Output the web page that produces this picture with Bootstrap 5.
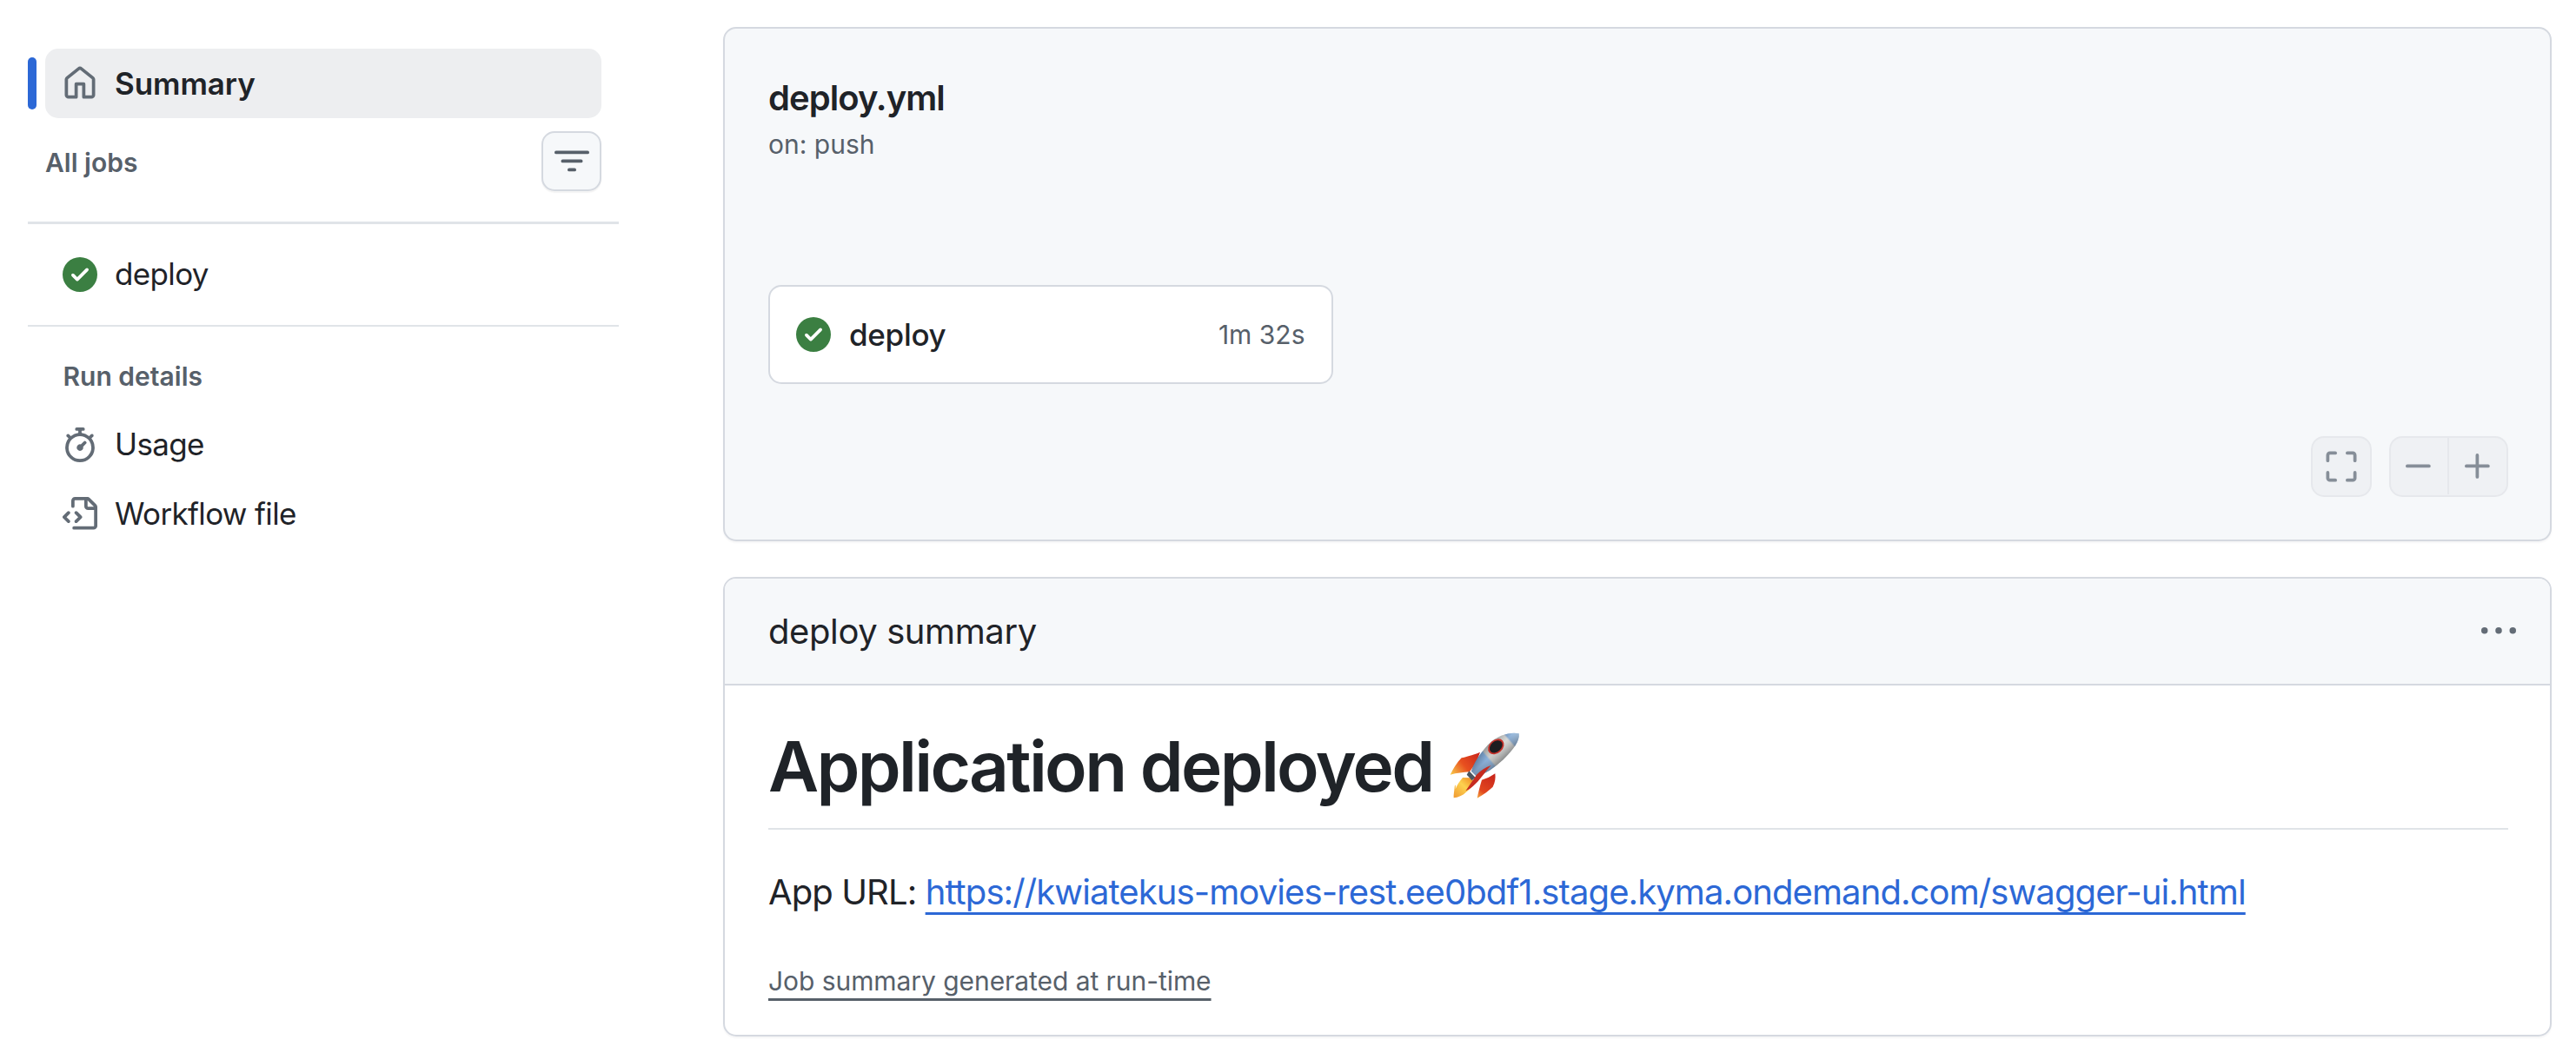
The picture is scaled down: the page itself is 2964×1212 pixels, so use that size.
<!DOCTYPE html>
<html lang="en">
<head>
<meta charset="utf-8">
<title>deploy summary</title>
<link href="https://cdn.jsdelivr.net/npm/bootstrap@5.3.0/dist/css/bootstrap.min.css" rel="stylesheet">
<style>
  body { font-family: Inter, "Liberation Sans", sans-serif; color: #1f2328; background: #fff; }
  svg { display: block; flex: none; fill: currentColor; }
  .oct { width: 40px; height: 40px; }
  .ic-muted { color: #636c76; }
  .ic-ok { color: #3b7f42; }

  .page-wrap { padding: 31px 28px 20px 32px; }
  .side-col { width: 680px; margin-top: 25px; flex: none; }
  .main-col { width: 2104px; margin-left: 120px; flex: none; }

  .active-bar { width: 10px; height: 60px; border-radius: 5px; background: #2c68d6; margin-right: 10px; flex: none; }
  .side-link { height: 80px; padding-left: 20px; gap: 20px; font-size: 35px; letter-spacing: -.65px; color: #1f2328; text-decoration: none; border-radius: 15px; }
  .side-link.is-active { width: 640px; background: #edeef0; font-weight: 600; letter-spacing: -.1px; }
  .side-indent { margin-left: 20px; }
  .jobs-row { margin: 15px 20px 35px 20px; height: 69px; }
  .side-head { font-size: 30px; font-weight: 600; color: #57606a; line-height: 40px; }
  .jobs-label { margin-top: 2px; }
  .filter-btn { width: 69px; height: 69px; padding: 0; background: #f6f8fa; border: 2.5px solid #d5d9e0; border-radius: 15px; color: #57606a; box-shadow: 0 2px 1px rgba(31,35,40,.05); }
  .side-rule { height: 2.5px; border: 0; margin: 0; opacity: 1; background: #e0e4e8; }
  .rule-gap { margin-top: 18px; }
  .run-head { margin: 37px 0 18.5px 40.5px; }

  .gh-panel { border: 2.5px solid #d5d9e0; border-radius: 15px; box-shadow: 0 2px 2px rgba(31,35,40,.04); color: #1f2328; }
  .graph-panel { background: #f6f8fa; height: 592px; padding: 55px 46.5px 0 50px; margin-bottom: 41px; }
  .wf-title { font-size: 40px; font-weight: 600; line-height: 50px; letter-spacing: -.95px; }
  .wf-sub { font-size: 30px; line-height: 44px; margin-top: 6px; color: #57606a; }
  .job-box { width: 649.5px; height: 114px; margin-top: 140px; padding: 0 30px; background: #fff; border: 2.5px solid #d5d9e0; border-radius: 15px; }
  .job-name { font-size: 35px; font-weight: 500; margin-left: 21px; letter-spacing: -.3px; }
  .job-time { font-size: 30px; color: #57606a; margin-left: auto; }
  .zoom-row { margin-top: 60px; gap: 20px; padding-right: 2px; }
  .zoom-btn { width: 70px; height: 70px; padding: 0; background: #eff1f4; border: 2.5px solid #e6e8ec; border-radius: 15px; color: #868e98; }
  .zoom-group { background: #eff1f4; border: 2.5px solid #e6e8ec; border-radius: 15px; overflow: hidden; }
  .zoom-group .zoom-btn { border: 0; border-radius: 0; width: 65px; height: 65px; background: transparent; }
  .zoom-group .zoom-btn + .zoom-btn { border-left: 2.5px solid #e6e8ec; width: 68px; }

  .sum-head { height: 122.5px; padding: 2px 39.5px 0 50px; background: #f6f8fa; border-bottom: 2.5px solid #d5d9e0; border-radius: 12.5px 12.5px 0 0; }
  .sum-title { font-size: 40px; line-height: 50px; letter-spacing: -.4px; }
  .sum-body { padding: 43px 48.5px 39.5px 50px; }
  .sum-h1 { font-size: 80px; font-weight: 600; line-height: 100px; letter-spacing: -2.7px; margin: 0; padding-bottom: 21px; border-bottom: 2.5px solid #e0e4e8; gap: 19px; color: #1f2328; }
  .sum-url { font-size: 40px; line-height: 60px; letter-spacing: -.9px; margin: 42px 0 0; }
  .sum-url a { color: #2c68d6; text-decoration-thickness: 3px; text-underline-offset: 9px; }
  .sum-note { font-size: 30px; line-height: 45px; letter-spacing: -.06px; margin: 50px 0 0; }
  .sum-note a { color: #57606a; text-decoration-thickness: 3px; text-underline-offset: 9px; }
  .rocket { width: 84px; height: 80px; }
</style>
</head>
<body>
<div class="d-flex page-wrap">
  <aside class="side-col d-flex flex-column">
    <div class="d-flex align-items-center">
      <span class="active-bar"></span>
      <a href="#" class="side-link is-active d-flex align-items-center">
        <svg class="oct ic-muted" viewBox="0 0 16 16" aria-hidden="true"><path d="M6.906.664a1.749 1.749 0 0 1 2.187 0l5.25 4.2c.415.332.657.835.657 1.367v7.019A1.75 1.75 0 0 1 13.25 15h-3.5a.75.75 0 0 1-.75-.75V9H7v5.25a.75.75 0 0 1-.75.75h-3.5A1.75 1.75 0 0 1 1 13.25V6.23c0-.531.242-1.034.657-1.366l5.25-4.2Zm1.25 1.171a.25.25 0 0 0-.312 0l-5.25 4.2a.25.25 0 0 0-.094.196v7.019c0 .138.112.25.25.25H5.5V8.25a.75.75 0 0 1 .75-.75h3.5a.75.75 0 0 1 .75.75v5.25h2.75a.25.25 0 0 0 .25-.25V6.23a.25.25 0 0 0-.094-.195Z"/></svg>
        Summary
      </a>
    </div>
    <div class="d-flex align-items-center justify-content-between jobs-row">
      <span class="side-head jobs-label">All jobs</span>
      <button type="button" class="btn filter-btn d-flex align-items-center justify-content-center" aria-label="Filter">
        <svg class="oct" viewBox="0 0 16 16" aria-hidden="true"><path d="M.75 3h14.5a.75.75 0 0 1 0 1.5H.75a.75.75 0 0 1 0-1.5ZM3 7.75A.75.75 0 0 1 3.75 7h8.5a.75.75 0 0 1 0 1.5h-8.5A.75.75 0 0 1 3 7.75Zm3 4a.75.75 0 0 1 .75-.75h2.5a.75.75 0 0 1 0 1.5h-2.5a.75.75 0 0 1-.75-.75Z"/></svg>
      </button>
    </div>
    <hr class="side-rule">
    <a href="#" class="side-link side-indent rule-gap d-flex align-items-center">
      <svg class="oct ic-ok" viewBox="0 0 16 16" aria-hidden="true"><path d="M8 16A8 8 0 1 1 8 0a8 8 0 0 1 0 16Zm3.78-9.72a.751.751 0 0 0-.018-1.042.751.751 0 0 0-1.042-.018L6.75 9.19 5.28 7.72a.751.751 0 0 0-1.042.018.751.751 0 0 0-.018 1.042l2 2a.75.75 0 0 0 1.06 0Z"/></svg>
      deploy
    </a>
    <hr class="side-rule rule-gap">
    <div class="side-head run-head">Run details</div>
    <a href="#" class="side-link side-indent d-flex align-items-center">
      <svg class="oct ic-muted" viewBox="0 0 16 16" aria-hidden="true"><path d="M5.75.75A.75.75 0 0 1 6.5 0h3a.75.75 0 0 1 0 1.5h-.75v1l-.001.041a6.724 6.724 0 0 1 3.464 1.435l.007-.006.75-.75a.749.749 0 0 1 1.275.326.749.749 0 0 1-.215.734l-.75.75-.006.007a6.75 6.75 0 1 1-10.548 0L2.72 5.03l-.75-.75a.751.751 0 0 1 .018-1.042.751.751 0 0 1 1.042-.018l.75.75.007.006A6.72 6.72 0 0 1 7.25 2.541V1.5H6.5a.75.75 0 0 1-.75-.75ZM8 14.5a5.25 5.25 0 1 0-.001-10.501A5.25 5.25 0 0 0 8 14.5Zm.389-6.7 1.33-1.33a.75.75 0 1 1 1.061 1.06L9.45 8.861A1.503 1.503 0 0 1 8 10.75a1.499 1.499 0 1 1 .389-2.95Z"/></svg>
      Usage
    </a>
    <a href="#" class="side-link side-indent d-flex align-items-center">
      <svg class="oct ic-muted" viewBox="0 0 16 16" aria-hidden="true"><path d="M4 1.75C4 .784 4.784 0 5.75 0h5.586c.464 0 .909.184 1.237.513l2.914 2.914c.329.328.513.773.513 1.237v8.586A1.75 1.75 0 0 1 14.25 15h-9a.75.75 0 0 1 0-1.5h9a.25.25 0 0 0 .25-.25V6h-2.75A1.75 1.75 0 0 1 10 4.25V1.5H5.75a.25.25 0 0 0-.25.25v2.5a.75.75 0 0 1-1.5 0Zm1.72 4.97a.75.75 0 0 1 1.06 0l2 2a.75.75 0 0 1 0 1.06l-2 2a.749.749 0 0 1-1.275-.326.749.749 0 0 1 .215-.734l1.47-1.47-1.47-1.47a.75.75 0 0 1 0-1.06ZM3.28 7.78 1.81 9.25l1.47 1.47a.751.751 0 0 1-.018 1.042.751.751 0 0 1-1.042.018l-2-2a.75.75 0 0 1 0-1.06l2-2a.751.751 0 0 1 1.042.018.751.751 0 0 1 .018 1.042Zm8.22-6.218V4.25c0 .138.112.25.25.25h2.688l-.011-.013-2.914-2.914-.013-.011Z"/></svg>
      Workflow file
    </a>
  </aside>

  <main class="main-col d-flex flex-column">
    <section class="gh-panel graph-panel d-flex flex-column">
      <div class="wf-title">deploy.yml</div>
      <div class="wf-sub">on: push</div>
      <div class="job-box d-flex align-items-center">
        <svg class="oct ic-ok" viewBox="0 0 16 16" aria-hidden="true"><path d="M8 16A8 8 0 1 1 8 0a8 8 0 0 1 0 16Zm3.78-9.72a.751.751 0 0 0-.018-1.042.751.751 0 0 0-1.042-.018L6.75 9.19 5.28 7.72a.751.751 0 0 0-1.042.018.751.751 0 0 0-.018 1.042l2 2a.75.75 0 0 0 1.06 0Z"/></svg>
        <span class="job-name">deploy</span>
        <span class="job-time">1m 32s</span>
      </div>
      <div class="d-flex justify-content-end zoom-row">
        <button type="button" class="btn zoom-btn d-flex align-items-center justify-content-center" aria-label="Fit">
          <svg class="oct" viewBox="0 0 16 16" aria-hidden="true"><path d="M1.75 10a.75.75 0 0 1 .75.75v2.5c0 .138.112.25.25.25h2.5a.75.75 0 0 1 0 1.5h-2.5A1.75 1.75 0 0 1 1 13.25v-2.5a.75.75 0 0 1 .75-.75Zm12.5 0a.75.75 0 0 1 .75.75v2.5A1.75 1.75 0 0 1 13.25 15h-2.5a.75.75 0 0 1 0-1.5h2.5a.25.25 0 0 0 .25-.25v-2.5a.75.75 0 0 1 .75-.75ZM2.75 2.5a.25.25 0 0 0-.25.25v2.5a.75.75 0 0 1-1.5 0v-2.5C1 1.784 1.784 1 2.75 1h2.5a.75.75 0 0 1 0 1.5ZM10 1.75a.75.75 0 0 1 .75-.75h2.5c.966 0 1.75.784 1.75 1.75v2.5a.75.75 0 0 1-1.5 0v-2.5a.25.25 0 0 0-.25-.25h-2.5a.75.75 0 0 1-.75-.75Z"/></svg>
        </button>
        <div class="zoom-group d-flex">
          <button type="button" class="btn zoom-btn d-flex align-items-center justify-content-center" aria-label="Zoom out">
            <svg class="oct" viewBox="0 0 16 16" aria-hidden="true"><path d="M2 7.75A.75.75 0 0 1 2.75 7h10a.75.75 0 0 1 0 1.5h-10A.75.75 0 0 1 2 7.75Z"/></svg>
          </button>
          <button type="button" class="btn zoom-btn d-flex align-items-center justify-content-center" aria-label="Zoom in">
            <svg class="oct" viewBox="0 0 16 16" aria-hidden="true"><path d="M7.75 2a.75.75 0 0 1 .75.75V7h4.25a.75.75 0 0 1 0 1.5H8.5v4.25a.75.75 0 0 1-1.5 0V8.5H2.75a.75.75 0 0 1 0-1.5H7V2.75A.75.75 0 0 1 7.75 2Z"/></svg>
          </button>
        </div>
      </div>
    </section>

    <section class="gh-panel">
      <div class="sum-head d-flex align-items-center justify-content-between">
        <span class="sum-title">deploy summary</span>
        <svg class="oct ic-muted" viewBox="0 0 16 16" aria-hidden="true"><path d="M8 9a1.5 1.5 0 1 0 0-3 1.5 1.5 0 0 0 0 3ZM1.5 9a1.5 1.5 0 1 0 0-3 1.5 1.5 0 0 0 0 3Zm13 0a1.5 1.5 0 1 0 0-3 1.5 1.5 0 0 0 0 3Z"/></svg>
      </div>
      <div class="sum-body">
        <h1 class="sum-h1 d-flex align-items-center">Application deployed
          <svg class="rocket" viewBox="80 5 252 240" aria-hidden="true">
            <defs>
              <linearGradient id="bodyAxis" gradientUnits="userSpaceOnUse" x1="322" y1="10" x2="155" y2="155">
                <stop offset="0" stop-color="#6fa4d8"/><stop offset=".17" stop-color="#3f78b8"/><stop offset=".2" stop-color="#bfc0bc"/><stop offset=".6" stop-color="#a9aaa6"/><stop offset=".63" stop-color="#3f7fc4"/><stop offset="1" stop-color="#17457c"/>
              </linearGradient>
              <linearGradient id="bodyCross" gradientUnits="userSpaceOnUse" x1="200" y1="50" x2="275" y2="125">
                <stop offset="0" stop-color="#555a5e" stop-opacity=".5"/><stop offset=".42" stop-color="#fff" stop-opacity=".4"/><stop offset="1" stop-color="#2c3034" stop-opacity=".8"/>
              </linearGradient>
              <linearGradient id="finL" gradientUnits="userSpaceOnUse" x1="185" y1="80" x2="90" y2="155">
                <stop offset="0" stop-color="#c9261c"/><stop offset=".55" stop-color="#e8501f"/><stop offset="1" stop-color="#f8c74a"/>
              </linearGradient>
              <linearGradient id="finR" gradientUnits="userSpaceOnUse" x1="235" y1="155" x2="180" y2="235">
                <stop offset="0" stop-color="#c9261c"/><stop offset=".7" stop-color="#e2471f"/><stop offset="1" stop-color="#f3a63c"/>
              </linearGradient>
              <linearGradient id="flame" gradientUnits="userSpaceOnUse" x1="165" y1="165" x2="100" y2="235">
                <stop offset="0" stop-color="#f0861f"/><stop offset=".45" stop-color="#fdd24f"/><stop offset="1" stop-color="#f09a33"/>
              </linearGradient>
            </defs>
            <path fill="url(#finL)" d="M188 76C160 88 138 92 124 96 108 112 96 132 85 154 108 148 130 146 152 144L176 110Z"/>
            <path fill="url(#finR)" d="M240 150C226 160 210 168 194 172 188 192 182 214 178 235 200 222 220 208 232 196 240 180 242 166 240 150Z"/>
            <path fill="url(#flame)" d="M152 165 128 164C116 178 108 190 103 204 105 186 102 186 100 196 99 210 96 224 97 234 112 232 128 226 140 214 154 204 165 190 170 178Z"/>
            <path fill="url(#bodyAxis)" d="M322 12C300 6 252 12 214 52 188 82 166 112 158 142L176 160C208 150 238 130 268 102 302 68 326 38 322 12Z"/>
            <path fill="url(#bodyCross)" d="M322 12C300 6 252 12 214 52 188 82 166 112 158 142L176 160C208 150 238 130 268 102 302 68 326 38 322 12Z"/>
            <ellipse cx="243" cy="57" rx="31" ry="23" transform="rotate(-42 243 57)" fill="#c8312a"/>
            <ellipse cx="243" cy="57" rx="25" ry="18" transform="rotate(-42 243 57)" fill="#1c1d20"/>
            <path fill="#4c5560" d="M150 141 172 164 160 174 142 154Z"/>
            <path fill="#c62b20" d="M226 122C206 142 196 162 172 186 160 198 150 206 138 210 152 190 164 172 176 154 190 140 208 128 226 122Z"/>
          </svg>
        </h1>
        <p class="sum-url">App URL: <a href="#">https://kwiatekus-movies-rest.ee0bdf1.stage.kyma.ondemand.com/swagger-ui.html</a></p>
        <p class="sum-note"><a href="#">Job summary generated at run-time</a></p>
      </div>
    </section>
  </main>
</div>
<script src="https://cdn.jsdelivr.net/npm/bootstrap@5.3.0/dist/js/bootstrap.bundle.min.js"></script>
</body>
</html>
